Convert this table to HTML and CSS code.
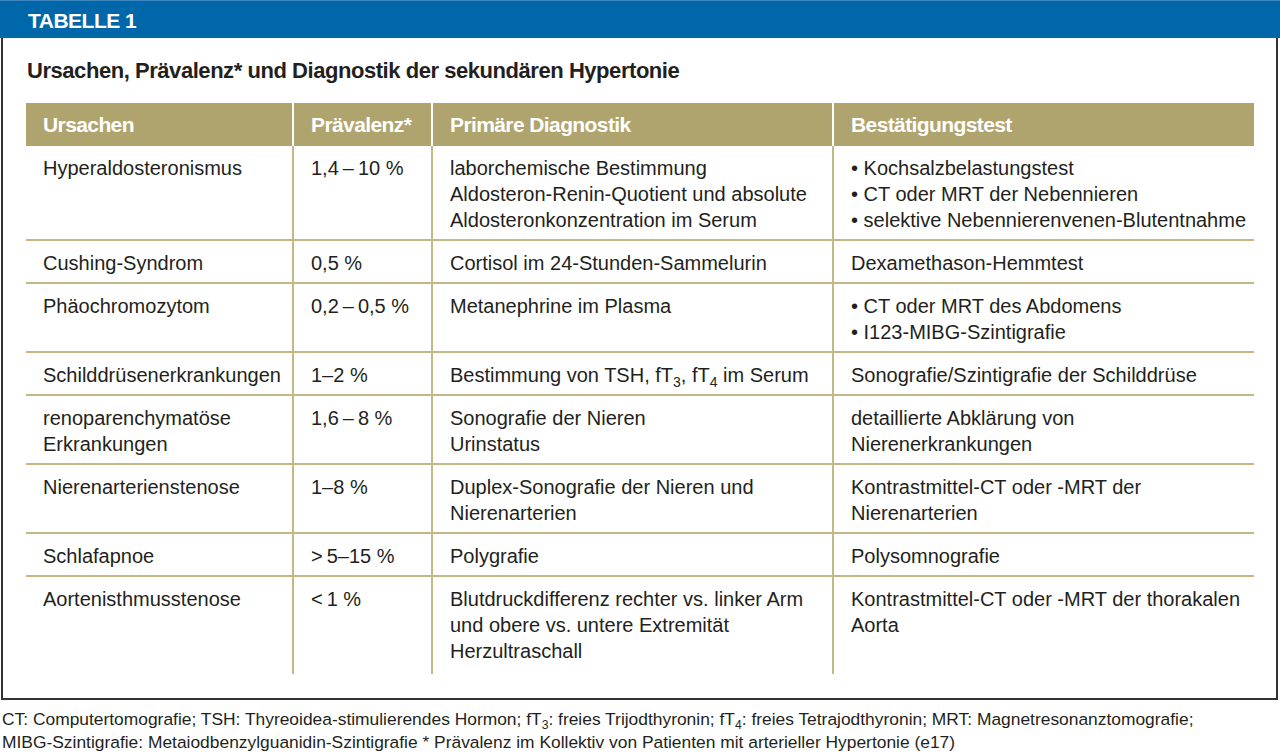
FILE: index.html
```html
<!DOCTYPE html>
<html>
<head>
	<title>Tabelle 1</title>
	<link rel="stylesheet" href="styles.css">
</head>
<body>
<div class="panel">
	<div class="panel_head">TABELLE 1</div>
	<div class="panel_body">
		<h1 class="title">Ursachen, Prävalenz* und Diagnostik der sekundären Hypertonie</h1>
		<table class="data">
			<colgroup>
				<col class="c1"><col class="c2"><col class="c3"><col class="c4">
			</colgroup>
			<thead>
				<tr>
					<th>Ursachen</th>
					<th>Prävalenz*</th>
					<th>Primäre Diagnostik</th>
					<th>Bestätigungstest</th>
				</tr>
			</thead>
			<tbody>
				<tr>
					<td>Hyperaldosteronismus</td>
					<td>1,4&thinsp;–&thinsp;10 %</td>
					<td>laborchemische Bestimmung<br>Aldosteron-Renin-Quotient und absolute<br>Aldosteronkonzentration im Serum</td>
					<td>• Kochsalzbelastungstest<br>• CT oder MRT der Nebennieren<br>• selektive Nebennierenvenen-Blutentnahme</td>
				</tr>
				<tr>
					<td>Cushing-Syndrom</td>
					<td>0,5 %</td>
					<td>Cortisol im 24-Stunden-Sammelurin</td>
					<td>Dexamethason-Hemmtest</td>
				</tr>
				<tr>
					<td>Phäochromozytom</td>
					<td>0,2&thinsp;–&thinsp;0,5 %</td>
					<td>Metanephrine im Plasma</td>
					<td>• CT oder MRT des Abdomens<br>• I123-MIBG-Szintigrafie</td>
				</tr>
				<tr>
					<td>Schilddrüsenerkrankungen</td>
					<td>1–2 %</td>
					<td>Bestimmung von TSH, fT<sub>3</sub>, fT<sub>4</sub> im Serum</td>
					<td>Sonografie/Szintigrafie der Schilddrüse</td>
				</tr>
				<tr>
					<td>renoparenchymatöse<br>Erkrankungen</td>
					<td>1,6&thinsp;–&thinsp;8 %</td>
					<td>Sonografie der Nieren<br>Urinstatus</td>
					<td>detaillierte Abklärung von<br>Nierenerkrankungen</td>
				</tr>
				<tr>
					<td>Nierenarterienstenose</td>
					<td>1–8 %</td>
					<td>Duplex-Sonografie der Nieren und<br>Nierenarterien</td>
					<td>Kontrastmittel-CT oder -MRT der<br>Nierenarterien</td>
				</tr>
				<tr>
					<td>Schlafapnoe</td>
					<td>&gt;&thinsp;5–15 %</td>
					<td>Polygrafie</td>
					<td>Polysomnografie</td>
				</tr>
				<tr>
					<td>Aortenisthmusstenose</td>
					<td>&lt;&thinsp;1 %</td>
					<td>Blutdruckdifferenz rechter vs. linker Arm<br>und obere vs. untere Extremität<br>Herzultraschall</td>
					<td>Kontrastmittel-CT oder -MRT der thorakalen<br>Aorta</td>
				</tr>
			</tbody>
		</table>
	</div>
</div>
<p class="footnote">CT: Computertomografie; TSH: Thyreoidea-stimulierendes Hormon; fT<sub>3</sub>: freies Trijodthyronin; fT<sub>4</sub>: freies Tetrajodthyronin; MRT: Magnetresonanztomografie;<br>MIBG-Szintigrafie: Metaiodbenzylguanidin-Szintigrafie * Prävalenz im Kollektiv von Patienten mit arterieller Hypertonie (e17)</p>
</body>
</html>
```
FILE: styles.css
```css
body {
	margin: 0;
	background: #fff;
	color: #231f20;
	font-family: "Liberation Sans", Arial, sans-serif;
}
.panel {
	width: 1277px;
	margin-left: 1px;
}
.panel_head {
	height: 38px;
	line-height: 40px;
	margin: 0 -2px 0 -1px;
	padding-left: 28px;
	background-color: #0067ab;
	border-top: 1px solid #3d86bf;
	box-sizing: border-box;
	color: #fff;
	font-weight: bold;
	font-size: 21px;
	letter-spacing: -0.5px;
}
.panel_body {
	border: 2px solid #333;
	border-top: none;
	padding: 20px 20px 24px 23px;
}
.title {
	margin: 0 0 19px 1px;
	font-weight: bold;
	font-size: 22px;
	letter-spacing: -0.45px;
	line-height: 26px;
	color: #231f20;
}
.data {
	border-collapse: collapse;
	table-layout: fixed;
	width: 1228px;
}
.c1 { width: 267px; }
.c2 { width: 139px; }
.c3 { width: 401px; }
.c4 { width: 421px; }
.data th {
	height: 43px;
	padding: 0 17px;
	text-align: left;
	background-color: #b0a46e;
	color: #fff;
	font-weight: bold;
	font-size: 21px;
	letter-spacing: -0.6px;
	border-left: 2px solid #fff;
	box-sizing: border-box;
}
.data th:first-child {
	border-left: none;
}
.data td {
	padding: 9px 0 6px 17px;
	vertical-align: top;
	white-space: nowrap;
	font-size: 20px;
	line-height: 26px;
	border-left: 2px solid #c4b886;
}
.data td:first-child {
	border-left: none;
}
.data tbody tr + tr td {
	border-top: 2px solid #c4b886;
}
.data tbody tr:last-child td {
	padding-bottom: 10px;
}
sub {
	font-size: 0.7em;
	line-height: 0;
}
.footnote {
	margin: 8px 0 0 2px;
	font-size: 17.4px;
	line-height: 23px;
	color: #231f20;
}
```
